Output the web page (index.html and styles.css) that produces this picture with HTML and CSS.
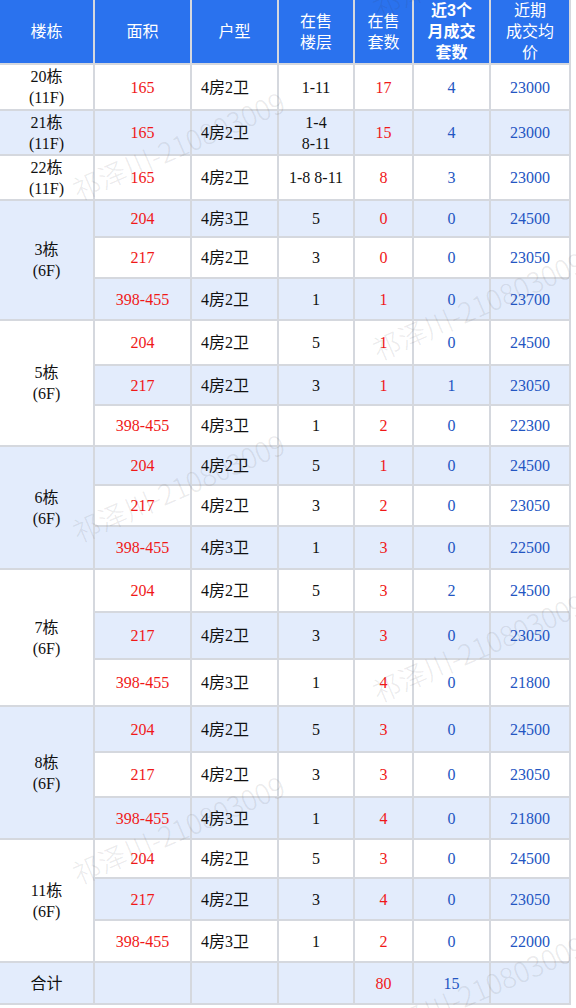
FILE: index.html
```html
<!DOCTYPE html>
<html lang="zh-CN">
<head>
<meta charset="utf-8">
<title>楼栋在售统计</title>
<link rel="stylesheet" href="styles.css">
</head>
<body>
<div class="wrap">
  <div class="grid">
    <div class="c h">楼栋</div>
    <div class="c h">面积</div>
    <div class="c h">户型</div>
    <div class="c h">在售<br>楼层</div>
    <div class="c h">在售<br>套数</div>
    <div class="c h hb">近3个<br>月成交<br>套数</div>
    <div class="c h">近期<br>成交均<br>价</div>

    <div class="c">20栋<br>(11F)</div><div class="c red">165</div><div class="c t">4房2卫</div><div class="c">1-11</div><div class="c red">17</div><div class="c blu">4</div><div class="c blu">23000</div>

    <div class="c a">21栋<br>(11F)</div><div class="c a red">165</div><div class="c a t">4房2卫</div><div class="c a">1-4<br>8-11</div><div class="c a red">15</div><div class="c a blu">4</div><div class="c a blu">23000</div>

    <div class="c">22栋<br>(11F)</div><div class="c red">165</div><div class="c t">4房2卫</div><div class="c">1-8 8-11</div><div class="c red">8</div><div class="c blu">3</div><div class="c blu">23000</div>

    <div class="c a g">3栋<br>(6F)</div>
    <div class="c a red">204</div><div class="c a t">4房3卫</div><div class="c a">5</div><div class="c a red">0</div><div class="c a blu">0</div><div class="c a blu">24500</div>
    <div class="c red">217</div><div class="c t">4房2卫</div><div class="c">3</div><div class="c red">0</div><div class="c blu">0</div><div class="c blu">23050</div>
    <div class="c a red">398-455</div><div class="c a t">4房2卫</div><div class="c a">1</div><div class="c a red">1</div><div class="c a blu">0</div><div class="c a blu">23700</div>

    <div class="c g">5栋<br>(6F)</div>
    <div class="c red">204</div><div class="c t">4房2卫</div><div class="c">5</div><div class="c red">1</div><div class="c blu">0</div><div class="c blu">24500</div>
    <div class="c a red">217</div><div class="c a t">4房2卫</div><div class="c a">3</div><div class="c a red">1</div><div class="c a blu">1</div><div class="c a blu">23050</div>
    <div class="c red">398-455</div><div class="c t">4房3卫</div><div class="c">1</div><div class="c red">2</div><div class="c blu">0</div><div class="c blu">22300</div>

    <div class="c a g">6栋<br>(6F)</div>
    <div class="c a red">204</div><div class="c a t">4房2卫</div><div class="c a">5</div><div class="c a red">1</div><div class="c a blu">0</div><div class="c a blu">24500</div>
    <div class="c red">217</div><div class="c t">4房2卫</div><div class="c">3</div><div class="c red">2</div><div class="c blu">0</div><div class="c blu">23050</div>
    <div class="c a red">398-455</div><div class="c a t">4房3卫</div><div class="c a">1</div><div class="c a red">3</div><div class="c a blu">0</div><div class="c a blu">22500</div>

    <div class="c g">7栋<br>(6F)</div>
    <div class="c red">204</div><div class="c t">4房2卫</div><div class="c">5</div><div class="c red">3</div><div class="c blu">2</div><div class="c blu">24500</div>
    <div class="c a red">217</div><div class="c a t">4房2卫</div><div class="c a">3</div><div class="c a red">3</div><div class="c a blu">0</div><div class="c a blu">23050</div>
    <div class="c red">398-455</div><div class="c t">4房3卫</div><div class="c">1</div><div class="c red">4</div><div class="c blu">0</div><div class="c blu">21800</div>

    <div class="c a g">8栋<br>(6F)</div>
    <div class="c a red">204</div><div class="c a t">4房2卫</div><div class="c a">5</div><div class="c a red">3</div><div class="c a blu">0</div><div class="c a blu">24500</div>
    <div class="c red">217</div><div class="c t">4房2卫</div><div class="c">3</div><div class="c red">3</div><div class="c blu">0</div><div class="c blu">23050</div>
    <div class="c a red">398-455</div><div class="c a t">4房3卫</div><div class="c a">1</div><div class="c a red">4</div><div class="c a blu">0</div><div class="c a blu">21800</div>

    <div class="c g">11栋<br>(6F)</div>
    <div class="c red">204</div><div class="c t">4房2卫</div><div class="c">5</div><div class="c red">3</div><div class="c blu">0</div><div class="c blu">24500</div>
    <div class="c a red">217</div><div class="c a t">4房2卫</div><div class="c a">3</div><div class="c a red">4</div><div class="c a blu">0</div><div class="c a blu">23050</div>
    <div class="c red">398-455</div><div class="c t">4房3卫</div><div class="c">1</div><div class="c red">2</div><div class="c blu">0</div><div class="c blu">22000</div>

    <div class="c a">合计</div><div class="c a"></div><div class="c a"></div><div class="c a"></div><div class="c a red">80</div><div class="c a blu">15</div><div class="c a"></div>
  </div>

  <div class="wm wm1">祁泽川-210803009</div>
  <div class="wm wm2">祁泽川-210803009</div>
  <div class="wm wm3">祁泽川-210803009</div>
  <div class="wm wm4">祁泽川-210803009</div>
  <div class="wm wm5">祁泽川-210803009</div>
  <div class="wm wm6">祁泽川-210803009</div>
  <div class="wm wm7">祁泽川-210803009</div>
</div>
</body>
</html>
```
FILE: styles.css
```css
html, body {
  margin: 0;
  padding: 0;
  background: #ffffff;
}

.wrap {
  position: relative;
  width: 576px;
  height: 1008px;
  overflow: hidden;
}

.grid {
  display: grid;
  width: 569px;
  grid-template-columns: 93px 95px 85px 74px 57px 75px 78px;
  grid-template-rows: 63px 44px 43px 43px 35px 39px 40px 43px 38px 39px 37px 39px 41px 41px 45px 45px 44px 43px 40px 37px 40px 40px 40px;
  gap: 2px;
  padding: 0 2px 2px 0;
  background: #d5d8de;
  font-family: "Liberation Serif", "Noto Sans CJK SC", serif;
  font-size: 16px;
  line-height: 21px;
  color: #111111;
}

.c {
  display: flex;
  align-items: center;
  justify-content: center;
  text-align: center;
  background: #ffffff;
}

.c.a {
  background: #e3ecfc;
}

.c.g {
  grid-row: span 3;
}

.c.t {
  justify-content: flex-start;
  text-align: left;
  padding-left: 9px;
}

.c.h {
  background: #2a72ee;
  color: #ffffff;
}

.c.hb {
  font-family: "Liberation Sans", "Noto Sans CJK SC", sans-serif;
  font-weight: bold;
}

.red {
  color: #f01818;
}

.blu {
  color: #2356c2;
}

.wm {
  position: absolute;
  width: 260px;
  margin-left: -130px;
  margin-top: -17px;
  text-align: center;
  font-family: "Noto Sans CJK SC", "Noto Sans", sans-serif;
  font-weight: 300;
  font-size: 28px;
  line-height: 34px;
  color: rgba(60, 60, 70, 0.11);
  transform: rotate(-23.5deg);
  pointer-events: none;
  white-space: nowrap;
}

.wm1 { left: 178px; top: 145px; }
.wm2 { left: 178px; top: 487px; }
.wm3 { left: 178px; top: 829px; }
.wm4 { left: 478px; top: -37px; }
.wm5 { left: 478px; top: 305px; }
.wm6 { left: 478px; top: 647px; }
.wm7 { left: 478px; top: 989px; }
```
